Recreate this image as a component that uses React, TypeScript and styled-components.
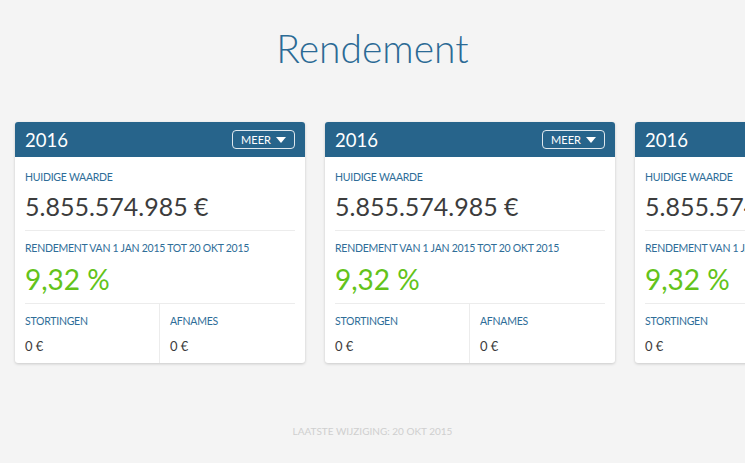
import React from "react";
import styled, { createGlobalStyle } from "styled-components";

const Global = createGlobalStyle`
  html, body { margin: 0; padding: 0; background: #f4f4f4; overflow: hidden; }
  body { font-family: "Lato", "Open Sans", sans-serif; }
`;

const Page = styled.div`
  width: 745px;
  height: 463px;
  display: flex;
  flex-direction: column;
  overflow: hidden;
`;

const Title = styled.h1`
  margin: 23px 0 0;
  height: 50px;
  font-size: 39px;
  line-height: 50px;
  font-weight: 300;
  color: #2b6a95;
  text-align: center;
`;

const Row = styled.div`
  display: flex;
  gap: 20px;
  padding-left: 15px;
  margin-top: 49px;
`;

const Card = styled.div`
  flex: 0 0 290px;
  background: #fff;
  border-radius: 3px;
  box-shadow: 0 1px 3px rgba(0, 0, 0, 0.18);
  overflow: hidden;
`;

const Header = styled.div`
  height: 35px;
  background: #27648b;
  display: flex;
  align-items: center;
  justify-content: space-between;
  padding: 0 10px;
  color: #fff;
`;

const Year = styled.span`
  font-size: 18.5px;
  font-weight: 400;
`;

const MoreButton = styled.button`
  height: 19px;
  width: 63px;
  border: 1px solid rgba(255, 255, 255, 0.85);
  border-radius: 4px;
  background: transparent;
  color: #fff;
  font-family: inherit;
  font-size: 11px;
  display: flex;
  align-items: center;
  justify-content: center;
  gap: 5px;
  padding: 0;
`;

const Caret = styled.span`
  width: 0;
  height: 0;
  border-left: 5px solid transparent;
  border-right: 5px solid transparent;
  border-top: 6px solid #fff;
`;

const Section = styled.div<{ $top?: boolean }>`
  margin: 0 10px;
  padding: ${(p) => (p.$top ? "12px" : "9px")} 0 7px;
  border-bottom: 1px solid #ececec;
`;

const Label = styled.div`
  font-size: 10.5px;
  letter-spacing: -0.25px;
  line-height: 16px;
  color: #2e6d98;
  text-transform: uppercase;
`;

const Big = styled.div<{ $green?: boolean }>`
  font-size: ${(p) => (p.$green ? "28px" : "25px")};
  line-height: 34px;
  margin-top: ${(p) => (p.$green ? "6px" : "4px")};
  font-weight: 400;
  color: ${(p) => (p.$green ? "#63c31a" : "#3c3c3c")};
`;

const Split = styled.div`
  display: grid;
  grid-template-columns: 135px 1fr;
  margin-left: 10px;
`;

const Cell = styled.div<{ $first?: boolean }>`
  padding: 9px 0 8px ${(p) => (p.$first ? "0" : "10px")};
  border-right: ${(p) => (p.$first ? "1px solid #ececec" : "none")};
`;

const Small = styled.div`
  font-size: 13px;
  line-height: 18px;
  margin-top: 8px;
  color: #3c3c3c;
`;

const Footer = styled.div`
  margin-top: 61px;
  line-height: 14px;
  text-align: center;
  font-size: 10px;
  color: #cfcfcf;
`;

function YearCard() {
  return (
    <Card>
      <Header>
        <Year>2016</Year>
        <MoreButton>
          MEER <Caret />
        </MoreButton>
      </Header>
      <Section $top>
        <Label>Huidige waarde</Label>
        <Big>5.855.574.985 €</Big>
      </Section>
      <Section>
        <Label>Rendement van 1 jan 2015 tot 20 okt 2015</Label>
        <Big $green>9,32 %</Big>
      </Section>
      <Split>
        <Cell $first>
          <Label>Stortingen</Label>
          <Small>0 €</Small>
        </Cell>
        <Cell>
          <Label>Afnames</Label>
          <Small>0 €</Small>
        </Cell>
      </Split>
    </Card>
  );
}

export default function App() {
  return (
    <Page>
      <Global />
      <Title>Rendement</Title>
      <Row>
        <YearCard />
        <YearCard />
        <YearCard />
      </Row>
      <Footer>LAATSTE WIJZIGING: 20 OKT 2015</Footer>
    </Page>
  );
}
